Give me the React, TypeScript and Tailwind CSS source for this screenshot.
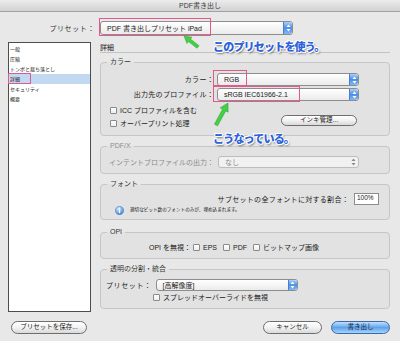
import React from 'react';

// Mac OS X style "PDF書き出し" dialog with annotations

const Arrows: React.FC<{ disabled?: boolean }> = ({ disabled }) =>
  disabled ? (
    <span className="w-[9px] h-full flex items-center justify-center">
      <svg width="5" height="8" viewBox="0 0 5 8">
        <path d="M2.5 0.5 L4.5 3 L0.5 3 Z M2.5 7.5 L4.5 5 L0.5 5 Z" fill="#8a8a8a" />
      </svg>
    </span>
  ) : (
    <span className="w-[9px] h-full flex items-center justify-center rounded-r-[3px] border-l border-[#4a7fc9] bg-linear-to-b from-[#a8d0f8] via-[#4d8fe4] to-[#7fb8f4]">
      <svg width="5" height="8" viewBox="0 0 5 8">
        <path d="M2.5 0.5 L4.5 3 L0.5 3 Z M2.5 7.5 L4.5 5 L0.5 5 Z" fill="#ffffff" />
      </svg>
    </span>
  );

const Select: React.FC<{ value: string; className: string; disabled?: boolean }> = ({ value, className, disabled }) => (
  <div
    className={`flex items-stretch rounded-[3px] border overflow-hidden ${
      disabled ? 'border-[#bdbdbd] bg-[#f1f1f1] text-[#8a8a8a]' : 'border-[#8d8d8d] bg-linear-to-b from-white to-[#ebebeb] text-[#1a1a1a]'
    } ${className}`}
  >
    <span className="flex-1 flex items-center pl-[6px] text-[7px] leading-none whitespace-nowrap">{value}</span>
    <Arrows disabled={disabled} />
  </div>
);

const Check: React.FC<{ label: string; className?: string }> = ({ label, className = '' }) => (
  <div className={`flex items-center ${className}`}>
    <span className="w-[7px] h-[7px] rounded-[1px] border border-[#8a8a8a] bg-linear-to-b from-white to-[#eeeeee]"></span>
    <span className="ml-[3px] text-[7px] leading-none whitespace-nowrap">{label}</span>
  </div>
);

const Button: React.FC<{ label: string; className: string; primary?: boolean }> = ({ label, className, primary }) => (
  <div
    className={`flex items-center justify-center rounded-full border text-[6.5px] leading-none whitespace-nowrap ${
      primary
        ? 'border-[#3d6aa6] bg-linear-to-b from-[#c4e2fc] via-[#5ea2ec] to-[#a5d4fb] text-[#10243f]'
        : 'border-[#6e6e6e] bg-linear-to-b from-white via-[#f2f2f2] to-[#d9d9d9] text-[#222]'
    } ${className}`}
  >
    {label}
  </div>
);

const Group: React.FC<{ title: string; className: string; muted?: boolean; children: React.ReactNode }> = ({
  title,
  className,
  muted,
  children,
}) => (
  <fieldset className={`rounded-[4px] border border-[#c6c6c6] bg-[#e2e2e2] min-w-0 ${className}`}>
    <legend className={`ml-[6px] px-[3px] text-[7px] leading-[8px] ${muted ? 'text-[#8c8c8c]' : 'text-[#333]'}`}>{title}</legend>
    {children}
  </fieldset>
);

const listItems = ['一般', '圧縮', 'トンボと裁ち落とし', '詳細', 'セキュリティ', '概要'];

const noteText =
  "absolute text-[11px] font-black leading-none tracking-[-0.8px] text-[#2d62d8] [text-shadow:1px_0_0_#fff,-1px_0_0_#fff,0_1px_0_#fff,0_-1px_0_#fff,1px_1px_0_#fff,-1px_-1px_0_#fff,1.5px_1.5px_2px_rgba(0,0,0,0.5)]";

export default function App() {
  return (
    <div className="relative w-[400px] h-[341px] overflow-hidden bg-[#e8e8e8] flex flex-col font-['Liberation_Sans','Noto_Sans_CJK_JP',sans-serif] text-[#1a1a1a]">
      {/* title bar */}
      <div className="h-[12px] shrink-0 flex items-center justify-center border-b border-[#a2a2a2] bg-linear-to-b from-[#ececec] to-[#d2d2d2] text-[7px] leading-none text-[#3a3a3a]">
        PDF書き出し
      </div>

      {/* preset */}
      <div className="flex items-center h-[14px] mt-[9px]">
        <span className="w-[95px] text-right text-[7px] leading-none tracking-[0.6px] text-[#333]">プリセット：</span>
        <Select className="ml-[5px] w-[193px] h-[14px]" value="PDF 書き出しプリセット iPad" />
      </div>

      <div className="flex items-start mt-[7px]">
        {/* category list */}
        <div className="ml-[8px] w-[83px] h-[270px] shrink-0 bg-white border border-[#4d4d4d] pt-px">
          {listItems.map((item) => (
            <div
              key={item}
              className={`h-[10px] flex items-center pl-[1px] text-[5px] leading-none ${item === '詳細' ? 'bg-[#c3d8f1]' : ''}`}
            >
              {item}
            </div>
          ))}
        </div>

        {/* detail pane */}
        <div className="ml-[9px] w-[290px] flex flex-col">
          <div className="h-[11px] flex items-center text-[7px] leading-none border-b border-[#c2c2c2]">詳細</div>

          <Group title="カラー" className="mt-[5px] pb-[5px]">
            <div className="flex items-center mt-[7px]">
              <span className="w-[113px] text-right text-[7px] leading-none tracking-[0.3px]">カラー：</span>
              <Select className="ml-[3px] w-[142px] h-[13px]" value="RGB" />
            </div>
            <div className="flex items-center mt-[2px]">
              <span className="w-[113px] text-right text-[7px] leading-none tracking-[0.3px]">出力先のプロファイル：</span>
              <Select className="ml-[3px] w-[142px] h-[13px]" value="sRGB IEC61966-2.1" />
            </div>
            <div className="flex mt-[3px]">
              <div className="pl-[9px] flex flex-col">
                <Check className="h-[13px]" label="ICC プロファイルを含む" />
                <Check className="h-[13px]" label="オーバープリント処理" />
              </div>
              <Button className="ml-auto mr-[32px] mt-[11px] w-[76px] h-[11px]" label="インキ管理..." />
            </div>
          </Group>

          <Group title="PDF/X" muted className="mt-[6px] pb-[5px]">
            <div className="flex items-center mt-[6px]">
              <span className="w-[113px] text-right text-[7px] leading-none text-[#8a8a8a]">インテントプロファイルの出力：</span>
              <Select disabled className="ml-[4px] w-[141px] h-[12px]" value="なし" />
            </div>
          </Group>

          <Group title="フォント" className="mt-[6px] pb-[5px]">
            <div className="flex items-center justify-end mt-[5px] pr-[10px]">
              <span className="text-[7px] leading-none tracking-[0.3px]">サブセットの全フォントに対する割合：</span>
              <span className="ml-[5px] w-[25px] h-[12px] bg-white border border-[#8c8c8c] text-[6.5px] leading-none pl-[2px] pt-[1px]">100%</span>
            </div>
            <div className="flex items-center h-[8px] mt-[1px] pl-[14px]">
              <svg width="9" height="9" viewBox="0 0 10 10">
                <defs>
                  <radialGradient id="ig" cx="0.4" cy="0.3" r="0.7">
                    <stop offset="0" stopColor="#d8ecff" />
                    <stop offset="1" stopColor="#3f86d8" />
                  </radialGradient>
                </defs>
                <circle cx="5" cy="5" r="4.6" fill="url(#ig)" stroke="#2f6db8" strokeWidth="0.5" />
                <circle cx="5" cy="2.8" r="0.8" fill="#fff" />
                <rect x="4.3" y="4.1" width="1.4" height="3.8" fill="#fff" />
              </svg>
              <span className="ml-[6px] text-[4.6px] leading-none">適切なビット数のフォントのみが、埋め込まれます。</span>
            </div>
          </Group>

          <Group title="OPI" className="mt-[8px] pb-[6px]">
            <div className="flex items-center h-[10px] mt-[6px]">
              <span className="w-[90px] text-right text-[7px] leading-none">OPI を無視：</span>
              <Check className="ml-[2px]" label="EPS" />
              <Check className="ml-[6px]" label="PDF" />
              <Check className="ml-[6px]" label="ビットマップ画像" />
            </div>
          </Group>

          <Group title="透明の分割・統合" className="mt-[6px] pb-[6px]">
            <div className="flex items-center mt-[6px] pl-[5px]">
              <span className="text-[7px] leading-none tracking-[0.6px]">プリセット：</span>
              <Select className="ml-[4px] w-[142px] h-[12px]" value="[高解像度]" />
            </div>
            <Check className="h-[10px] mt-[1px] pl-[52px]" label="スプレッドオーバーライドを無視" />
          </Group>
        </div>
      </div>

      {/* footer buttons */}
      <div className="flex items-center h-[13px] mt-[9px] pl-[11px] pr-[10px]">
        <Button className="w-[76px] h-[13px]" label="プリセットを保存..." />
        <Button className="ml-auto w-[59px] h-[13px]" label="キャンセル" />
        <Button primary className="ml-[9px] w-[59px] h-[13px]" label="書き出し" />
      </div>

      {/* annotations */}
      <div className="absolute left-[99px] top-[18px] w-[112px] h-[18px] border border-[#e2598e]"></div>
      <div className="absolute left-[213px] top-[70px] w-[34px] h-[16px] border border-[#e2598e]"></div>
      <div className="absolute left-[213px] top-[86px] w-[87px] h-[16px] border border-[#e2598e]"></div>
      <div className="absolute left-[8px] top-[73px] w-[23px] h-[11px] border border-[#e2598e]"></div>

      <svg className="absolute left-[180px] top-[32px]" width="22" height="18" viewBox="0 0 22 18">
        <polygon
          points="18.99,13.74 10.49,7.07 11.97,5.19 4,4 7.03,11.47 8.51,9.59 17.01,16.26"
          fill="#44d044"
          stroke="#2a9a2a"
          strokeWidth="0.5"
        />
      </svg>
      <svg className="absolute left-[210px] top-[100px]" width="22" height="28" viewBox="0 0 22 28">
        <polygon
          points="7.58,25.86 15.75,10.88 18.12,12.18 18,3 10.22,7.86 12.59,9.16 4.42,24.14"
          fill="#44d044"
          stroke="#2a9a2a"
          strokeWidth="0.5"
        />
      </svg>

      <span className={`${noteText} left-[213px] top-[42px]`}>このプリセットを使う。</span>
      <span className={`${noteText} left-[213px] top-[134px]`}>こうなっている。</span>
    </div>
  );
}
